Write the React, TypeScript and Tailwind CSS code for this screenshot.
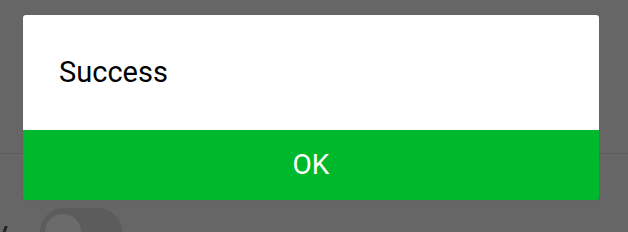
import React from "react";

export default function App() {
  return (
    <div className="relative w-[628px] h-[232px] overflow-hidden bg-[#666666] font-['Roboto',sans-serif]">
      <div className="pt-[153px]">
        <div className="h-px bg-[#5b5b5b]" />
        <div className="flex items-start pt-[54px]">
          <div className="mt-[18px] ml-[3px] w-[3px] h-[10px] bg-[#222] skew-x-[-20deg]" />
          <div className="ml-[34px] w-[82px] h-[48px] rounded-full bg-[#5c5c5c] pl-[5px] pt-[6px]">
            <div className="w-[36px] h-[36px] rounded-full bg-[#6b6b6b]" />
          </div>
        </div>
      </div>
      <div className="absolute left-[23px] top-[15px] w-[576px] rounded-[3px] overflow-hidden shadow-[0_0_1px_rgba(0,0,0,0.3)]">
        <div className="h-[115px] bg-white flex items-center pl-[36px]">
          <span className="text-[29px] leading-none text-black">Success</span>
        </div>
        <div className="h-[70px] bg-[#00b82c] flex items-center justify-center">
          <span className="text-[28px] leading-none text-white">OK</span>
        </div>
      </div>
    </div>
  );
}
